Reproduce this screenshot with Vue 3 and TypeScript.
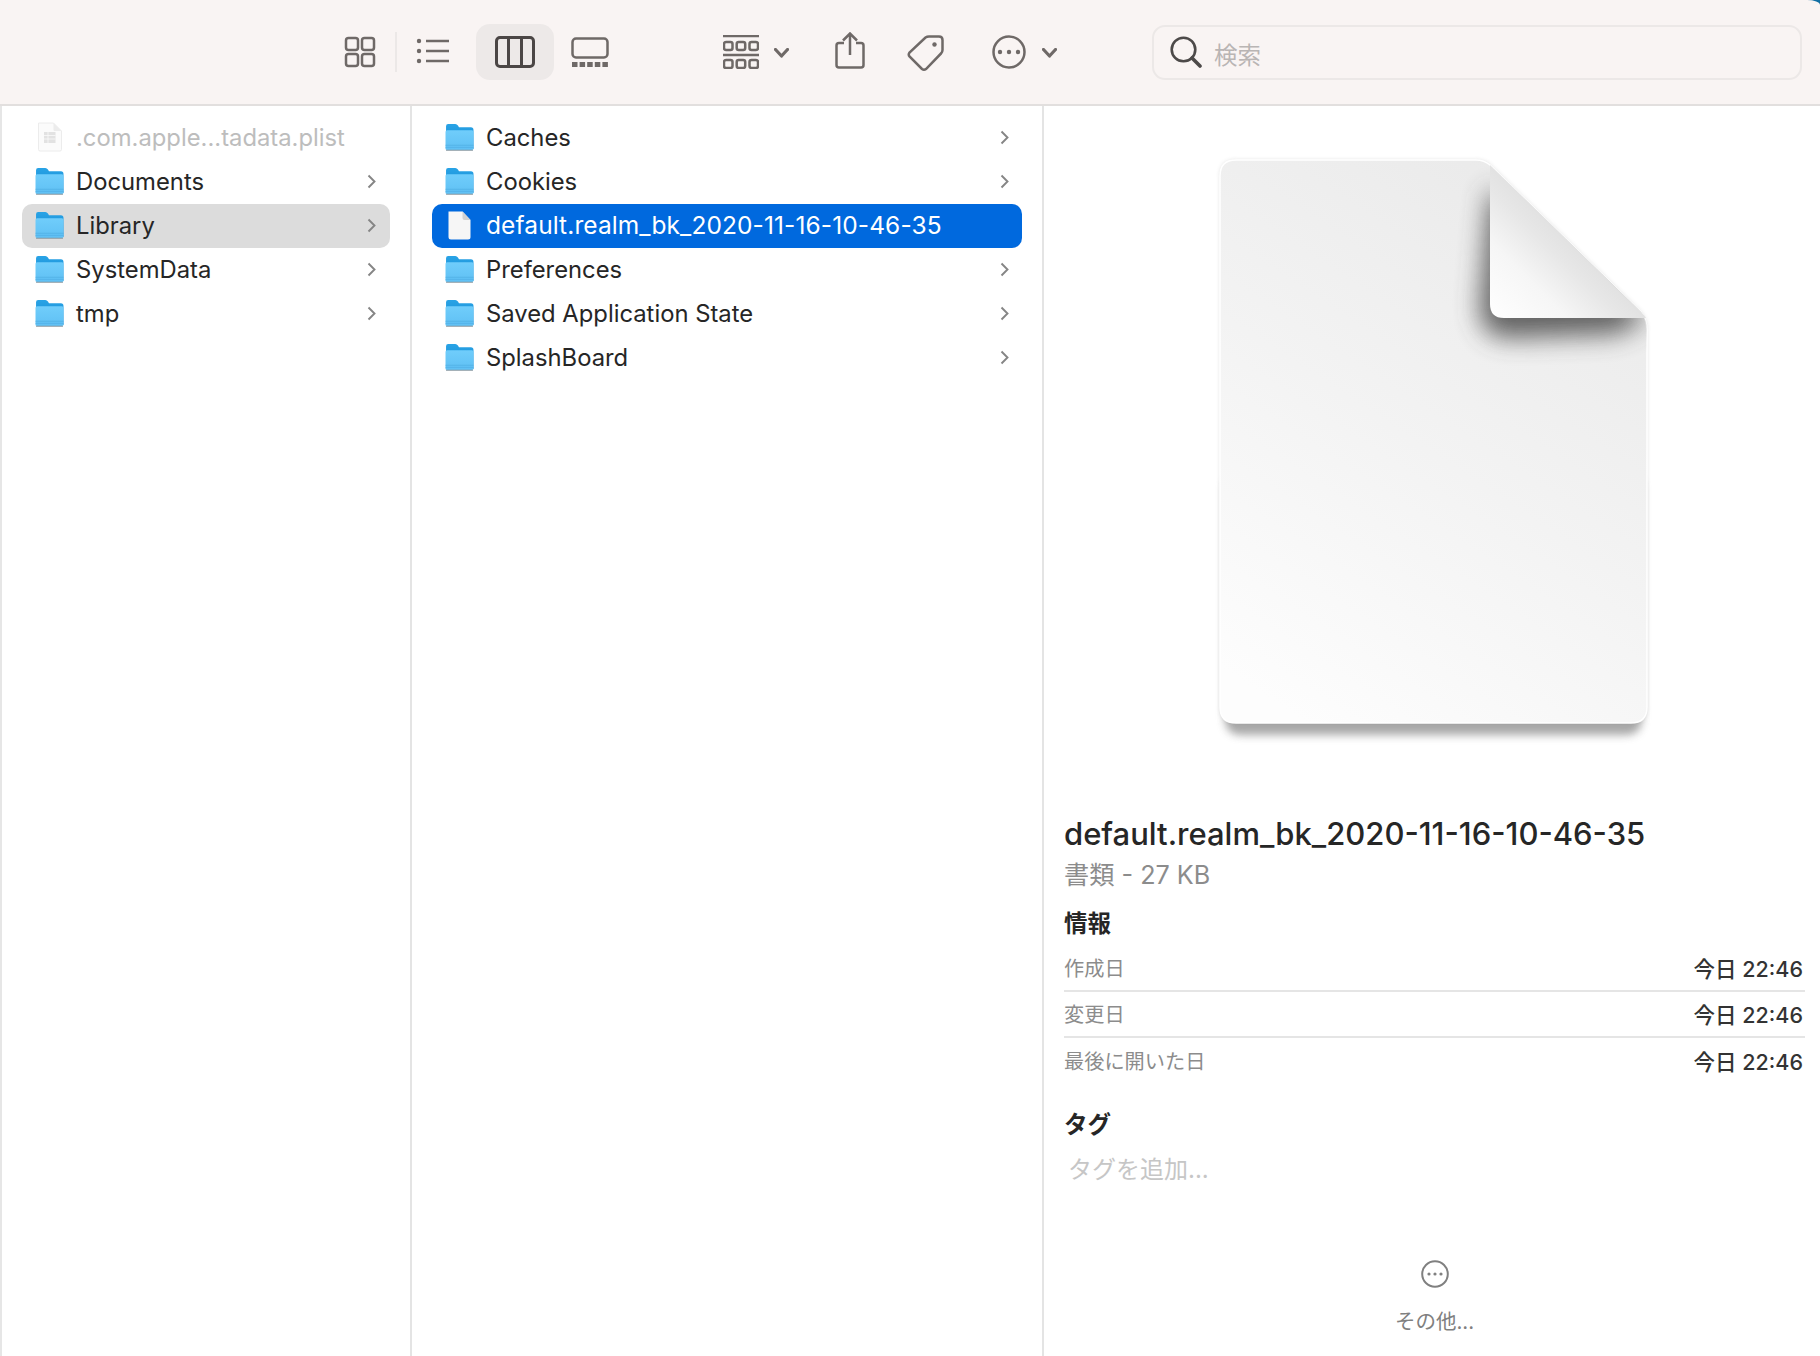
<script setup lang="ts">
interface Entry {
  name: string
  kind: 'folder' | 'doc' | 'plist'
  state?: 'muted' | 'inactive' | 'active'
}

const firstColumn: Entry[] = [
  { name: '.com.apple...tadata.plist', kind: 'plist', state: 'muted' },
  { name: 'Documents', kind: 'folder' },
  { name: 'Library', kind: 'folder', state: 'inactive' },
  { name: 'SystemData', kind: 'folder' },
  { name: 'tmp', kind: 'folder' }
]

const secondColumn: Entry[] = [
  { name: 'Caches', kind: 'folder' },
  { name: 'Cookies', kind: 'folder' },
  { name: 'default.realm_bk_2020-11-16-10-46-35', kind: 'doc', state: 'active' },
  { name: 'Preferences', kind: 'folder' },
  { name: 'Saved Application State', kind: 'folder' },
  { name: 'SplashBoard', kind: 'folder' }
]

const columns = [
  { key: 'first', rows: firstColumn },
  { key: 'second', rows: secondColumn }
]

const infoRows = [
  { label: '作成日', value: '今日 22:46' },
  { label: '変更日', value: '今日 22:46' },
  { label: '最後に開いた日', value: '今日 22:46' }
]
</script>

<template>
  <div class="finder">
    <!-- 共通のSVG定義 -->
    <svg class="sprite" width="0" height="0">
      <defs>
        <linearGradient id="folderBody" x1="0" y1="0" x2="0" y2="1">
          <stop offset="0" stop-color="#70cdfb" />
          <stop offset="1" stop-color="#5fc0f4" />
        </linearGradient>
        <linearGradient id="folderBack" x1="0" y1="0" x2="0" y2="1">
          <stop offset="0" stop-color="#29a3e6" />
          <stop offset="1" stop-color="#1488cf" />
        </linearGradient>
        <linearGradient id="pageBody" x1="0.7" y1="0" x2="0.2" y2="1">
          <stop offset="0" stop-color="#eaeaea" />
          <stop offset="0.5" stop-color="#f3f3f3" />
          <stop offset="1" stop-color="#fdfdfd" />
        </linearGradient>
        <linearGradient id="pageFold" x1="0" y1="1" x2="1" y2="0">
          <stop offset="0" stop-color="#ffffff" />
          <stop offset="0.25" stop-color="#f6f6f6" />
          <stop offset="0.42" stop-color="#e7e7e7" />
          <stop offset="0.5" stop-color="#e2e2e2" />
        </linearGradient>
        <filter id="edgeShadow" x="-5%" y="-5%" width="110%" height="110%">
          <feGaussianBlur stdDeviation="2" />
        </filter>
        <filter id="bodyShadow" x="-10%" y="-20%" width="120%" height="140%">
          <feGaussianBlur stdDeviation="4" />
        </filter>
        <filter id="foldShadow" x="-40%" y="-40%" width="180%" height="180%">
          <feGaussianBlur stdDeviation="13" />
        </filter>
        <clipPath id="pageClip">
          <path d="M18 2H258Q266 2 272 7L423 154Q429 162 429 172V549Q429 565 413 565H18Q2 565 2 549V18Q2 2 18 2Z" />
        </clipPath>
        <symbol id="folder" viewBox="0 0 28 27">
          <path d="M1 25V3Q1 1 3 1H10Q11.500 1 12.500 2.500L13.500 4H25Q27.500 4 27.500 6.500V25Z" fill="url(#folderBack)" />
          <path d="M0.500 8.500Q0.500 7 2 7H26Q27.500 7 27.500 8.500V24.500Q27.500 26 26 26H2Q0.500 26 0.500 24.500Z" fill="url(#folderBody)" />
          <path d="M0.500 21.500H27.500M0.500 23.500H27.500" stroke="#4fadE3" stroke-width="0.700" fill="none" />
          <path d="M1 26.300H27" stroke="#8a9aa4" stroke-width="1" fill="none" />
        </symbol>
      </defs>
    </svg>

    <header class="toolbar">
      <svg class="tool grid-icon" width="32" height="32" viewBox="0 0 32 32">
        <rect x="2" y="2" width="12" height="12" rx="2.500" />
        <rect x="18" y="2" width="12" height="12" rx="2.500" />
        <rect x="2" y="18" width="12" height="12" rx="2.500" />
        <rect x="18" y="18" width="12" height="12" rx="2.500" />
      </svg>
      <span class="tool-divider"></span>
      <svg class="tool list-icon" width="34" height="26" viewBox="0 0 34 26">
        <circle cx="3" cy="3" r="2.200" class="solid" />
        <circle cx="3" cy="13" r="2.200" class="solid" />
        <circle cx="3" cy="23" r="2.200" class="solid" />
        <path d="M10 3H33M10 13H33M10 23H33" />
      </svg>
      <div class="view-active">
        <svg class="tool dark" width="40" height="32" viewBox="0 0 40 32">
          <rect x="1.500" y="1.500" width="37" height="29" rx="3.500" />
          <path d="M13.500 1.500V30.500M26.500 1.500V30.500" />
        </svg>
      </div>
      <svg class="tool gallery-icon" width="38" height="30" viewBox="0 0 38 30">
        <rect x="1.500" y="1.500" width="35" height="19" rx="3.500" />
        <g class="solid">
          <rect x="1" y="25" width="5.500" height="5" />
          <rect x="8.600" y="25" width="5.500" height="5" />
          <rect x="16.200" y="25" width="5.500" height="5" />
          <rect x="23.800" y="25" width="5.500" height="5" />
          <rect x="31.400" y="25" width="5.500" height="5" />
        </g>
      </svg>
      <svg class="tool group-icon" width="36" height="34" viewBox="0 0 36 34">
        <path d="M0 1H36M0 20H36" />
        <rect x="1" y="7" width="8.500" height="8" rx="2" />
        <rect x="13.700" y="7" width="8.500" height="8" rx="2" />
        <rect x="26.500" y="7" width="8.500" height="8" rx="2" />
        <rect x="1" y="25" width="8.500" height="8" rx="2" />
        <rect x="13.700" y="25" width="8.500" height="8" rx="2" />
        <rect x="26.500" y="25" width="8.500" height="8" rx="2" />
      </svg>
      <svg class="tool chev chev-group" width="15" height="10" viewBox="0 0 15 10">
        <path d="M1.500 1.500L7.500 8L13.500 1.500" />
      </svg>
      <svg class="tool share-icon" width="30" height="38" viewBox="0 0 30 38">
        <path d="M9 11H4Q1.500 11 1.500 13.500V33Q1.500 35.500 4 35.500H26Q28.500 35.500 28.500 33V13.500Q28.500 11 26 11H21" />
        <path d="M15 23V2M8 8.500L15 1.500L22 8.500" />
      </svg>
      <svg class="tool tag-icon" width="38" height="38" viewBox="0 0 38 38">
        <path d="M22 2.500H32Q35.500 2.500 35.500 6V16Q35.500 18 34 19.500L19 35Q17 36.500 15 35L2.500 22.500Q1 20.500 2.500 18.500L18.500 3.500Q20 2.500 22 2.500Z" />
        <circle cx="27.500" cy="10.500" r="2.200" class="solid" />
      </svg>
      <svg class="tool more-icon" width="34" height="34" viewBox="0 0 34 34">
        <circle cx="17" cy="17" r="15.500" />
        <circle cx="8" cy="17" r="2.200" class="solid" />
        <circle cx="17" cy="17" r="2.200" class="solid" />
        <circle cx="26" cy="17" r="2.200" class="solid" />
      </svg>
      <svg class="tool chev chev-more" width="15" height="10" viewBox="0 0 15 10">
        <path d="M1.500 1.500L7.500 8L13.500 1.500" />
      </svg>
      <div class="search">
        <svg class="search-icon" width="32" height="32" viewBox="0 0 32 32">
          <circle cx="13.500" cy="13.500" r="11.800" />
          <path d="M22 22L30 30" class="handle" />
        </svg>
        <span class="search-text">検索</span>
      </div>
    </header>

    <main class="columns">
      <section v-for="col in columns" :key="col.key" class="column" :class="col.key">
        <div
          v-for="row in col.rows"
          :key="row.name"
          class="row"
          :class="row.state"
        >
          <svg v-if="row.kind === 'folder'" class="row-icon" width="29" height="28">
            <use href="#folder" />
          </svg>
          <svg v-else-if="row.kind === 'doc'" class="row-icon doc" width="29" height="29" viewBox="0 0 28 29">
            <path d="M3 0.500H17L25 9V26Q25 28.500 22.500 28.500H5.500Q3 28.500 3 26Z" fill="#f6f6f6" />
            <path d="M17 0.500V7Q17 9 19 9H25Z" fill="#d2d2d2" />
          </svg>
          <svg v-else class="row-icon" width="29" height="30" viewBox="0 0 28 30">
            <path d="M3 1H18L26 9V27.500Q26 29 24.500 29H4.500Q3 29 3 27.500Z" fill="#fbfbfb" stroke="#ececec" />
            <path d="M18 1V8Q18 9 19 9H26Z" fill="#ececec" />
            <rect x="8.500" y="10" width="11.500" height="11" fill="#e2e2e2" />
            <path d="M8.500 13.500H20M8.500 17H20M12.500 10V21" stroke="#fafafa" stroke-width="0.800" />
          </svg>
          <span class="row-name">{{ row.name }}</span>
          <svg v-if="row.kind === 'folder'" class="row-chevron" width="9" height="15" viewBox="0 0 9 15">
            <path d="M1.500 1.500L7.500 7.500L1.500 13.500" />
          </svg>
        </div>
      </section>

      <aside class="preview">
        <div class="page-wrap">
          <svg class="page" width="433" height="590" viewBox="0 0 433 590">
            <path d="M7 320H424V556Q424 573 407 573H24Q7 573 7 556Z" fill="#6e6e6e" opacity="0.6" filter="url(#bodyShadow)" transform="translate(0 4)" />
            <path d="M18 2H258Q266 2 272 7L423 154Q429 162 429 172V549Q429 565 413 565H18Q2 565 2 549V18Q2 2 18 2Z" fill="#888" opacity="0.3" filter="url(#edgeShadow)" />
            <path d="M18 2H258Q266 2 272 7L423 154Q429 162 429 172V549Q429 565 413 565H18Q2 565 2 549V18Q2 2 18 2Z" fill="url(#pageBody)" stroke="#ffffff" stroke-width="1.500" />
            <g clip-path="url(#pageClip)">
              <path d="M272 30L262 150Q262 180 292 180L400 176L429 160Z" fill="#4a4a4a" opacity="0.85" filter="url(#foldShadow)" />
            </g>
            <path d="M272 7L423 154Q427 158 428 160H286Q272 160 272 146Z" fill="url(#pageFold)" />
          </svg>
        </div>

        <h1 class="title">default.realm_bk_2020-11-16-10-46-35</h1>
        <p class="subtitle">書類 - 27 KB</p>

        <h2 class="heading">情報</h2>
        <dl class="info">
          <div v-for="item in infoRows" :key="item.label" class="info-row">
            <dt>{{ item.label }}</dt>
            <dd>{{ item.value }}</dd>
          </div>
        </dl>

        <h2 class="heading tags">タグ</h2>
        <p class="add-tag">タグを追加...</p>

        <div class="more">
          <svg width="28" height="28" viewBox="0 0 28 28">
            <circle cx="14" cy="14" r="12.800" class="ring" />
            <circle cx="8" cy="14" r="1.600" />
            <circle cx="14" cy="14" r="1.600" />
            <circle cx="20" cy="14" r="1.600" />
          </svg>
          <span>その他...</span>
        </div>
      </aside>
    </main>
  </div>
</template>

<style>
html,
body {
  background: #fff;
}
</style>

<style scoped>
.finder {
  width: 1820px;
  height: 1356px;
  overflow: hidden;
  display: flex;
  flex-direction: column;
  background: #116fa3;
  font-family: Inter, 'Noto Sans CJK JP', sans-serif;
  color: #262626;
}

.sprite {
  display: block;
}

/* ツールバー */
.toolbar {
  height: 104px;
  flex: none;
  box-sizing: content-box;
  display: flex;
  align-items: center;
  padding-left: 344px;
  background: #f9f4f3;
  border-bottom: 2px solid #e2dfde;
  border-top-right-radius: 13px 5px;
}

.tool {
  flex: none;
  fill: none;
  stroke: #6f6967;
  stroke-width: 2.500;
}

.tool .solid {
  fill: #6f6967;
  stroke: none;
}

.tool.dark {
  stroke: #4b4645;
  stroke-width: 3;
}

.tool-divider {
  width: 2px;
  height: 40px;
  margin-left: 19px;
  background: #ece8e7;
}

.list-icon {
  margin-left: 19px;
  margin-top: -2px;
}

.view-active {
  width: 78px;
  height: 56px;
  margin-left: 26px;
  border-radius: 14px;
  background: #ede9e8;
  display: flex;
  align-items: center;
  justify-content: center;
}

.gallery-icon {
  margin-left: 17px;
}

.group-icon {
  margin-left: 114px;
}

.chev path {
  stroke-width: 3.200;
  stroke-linecap: round;
  stroke-linejoin: round;
}

.chev-group {
  margin-left: 15px;
  margin-top: 2px;
}

.share-icon {
  margin-left: 46px;
  margin-top: -3px;
}

.tag-icon {
  margin-left: 42px;
  margin-top: 1px;
}

.more-icon {
  margin-left: 47px;
}

.chev-more {
  margin-left: 16px;
  margin-top: 2px;
}

.search {
  width: 650px;
  height: 55px;
  margin-left: 95px;
  box-sizing: border-box;
  border: 2px solid #ece8e7;
  border-radius: 13px;
  display: flex;
  align-items: center;
  padding-left: 16px;
}

.search-icon {
  flex: none;
  fill: none;
  stroke: #4d4a49;
  stroke-width: 2.600;
}

.search-icon .handle {
  stroke-width: 3.600;
  stroke-linecap: round;
}

.search-text {
  margin-left: 12px;
  margin-top: 3px;
  font-size: 23.500px;
  color: #b9b5b4;
}

/* カラム */
.columns {
  flex: 1;
  min-height: 0;
  display: flex;
  background: #fff;
  border-left: 2px solid #e6e6e6;
}

.column {
  flex: none;
  box-sizing: border-box;
  padding-top: 10px;
  border-right: 2px solid #e4e4e4;
}

.column.first {
  width: 410px;
  padding-left: 20px;
  padding-right: 20px;
}

.column.second {
  width: 632px;
  padding-left: 20px;
  padding-right: 20px;
}

.row {
  height: 44px;
  box-sizing: border-box;
  padding-bottom: 2px;
  display: flex;
  align-items: center;
  border-radius: 10px;
  font-size: 23.800px;
}

.first .row {
  padding-left: 13px;
  padding-right: 14px;
}

.second .row {
  padding-left: 13px;
  padding-right: 13px;
}

.row-icon {
  flex: none;
}

.row-name {
  margin-left: 12px;
  white-space: nowrap;
}

.second .row-name {
  margin-left: 12px;
}

.row-chevron {
  margin-left: auto;
  fill: none;
  stroke: #858585;
  stroke-width: 1.900;
}

.row.muted {
  color: #bdbdbd;
}

.row.inactive {
  background: #dcdcdc;
}

.row.active {
  background: #0069de;
  color: #fff;
  font-size: 24.500px;
  letter-spacing: 0.1px;
}

/* プレビュー */
.preview {
  flex: 1;
  min-width: 0;
  box-sizing: border-box;
  padding: 0 15px 0 20px;
  display: flex;
  flex-direction: column;
}

.page-wrap {
  height: 708px;
  flex: none;
  padding-top: 52px;
  padding-left: 154px;
  box-sizing: border-box;
}

.page {
  display: block;
  overflow: visible;
}

.title {
  margin: 0;
  font-size: 31px;
  line-height: 40px;
  font-weight: 500;
  white-space: nowrap;
}

.subtitle {
  margin: 4px 0 0;
  font-size: 25.200px;
  line-height: 34px;
  color: #8c8c8c;
}

.heading {
  margin: 15px 0 0;
  font-size: 23.500px;
  line-height: 34px;
  font-weight: 600;
}

.info {
  margin: 5px 0 0;
}

.info-row {
  height: 46px;
  box-sizing: border-box;
  display: flex;
  align-items: center;
  justify-content: space-between;
  padding-bottom: 2px;
  border-bottom: 2px solid #e5e5e5;
}

.info-row:last-child {
  border-bottom: none;
}

.info-row dt {
  font-size: 20.200px;
  color: #8c8c8c;
}

.info-row dd {
  margin: 0;
  padding-right: 2px;
  font-size: 21.500px;
  font-weight: 500;
  color: #333;
}

.heading.tags {
  margin-top: 24px;
}

.add-tag {
  margin: 12px 0 0 4px;
  font-size: 24px;
  line-height: 32px;
  color: #c6c6c6;
}

.more {
  margin-top: 74px;
  display: flex;
  flex-direction: column;
  align-items: center;
  gap: 20px;
  font-size: 20.500px;
  line-height: 28px;
  color: #808080;
  fill: #808080;
}

.more .ring {
  fill: none;
  stroke: #808080;
  stroke-width: 2;
}
</style>
